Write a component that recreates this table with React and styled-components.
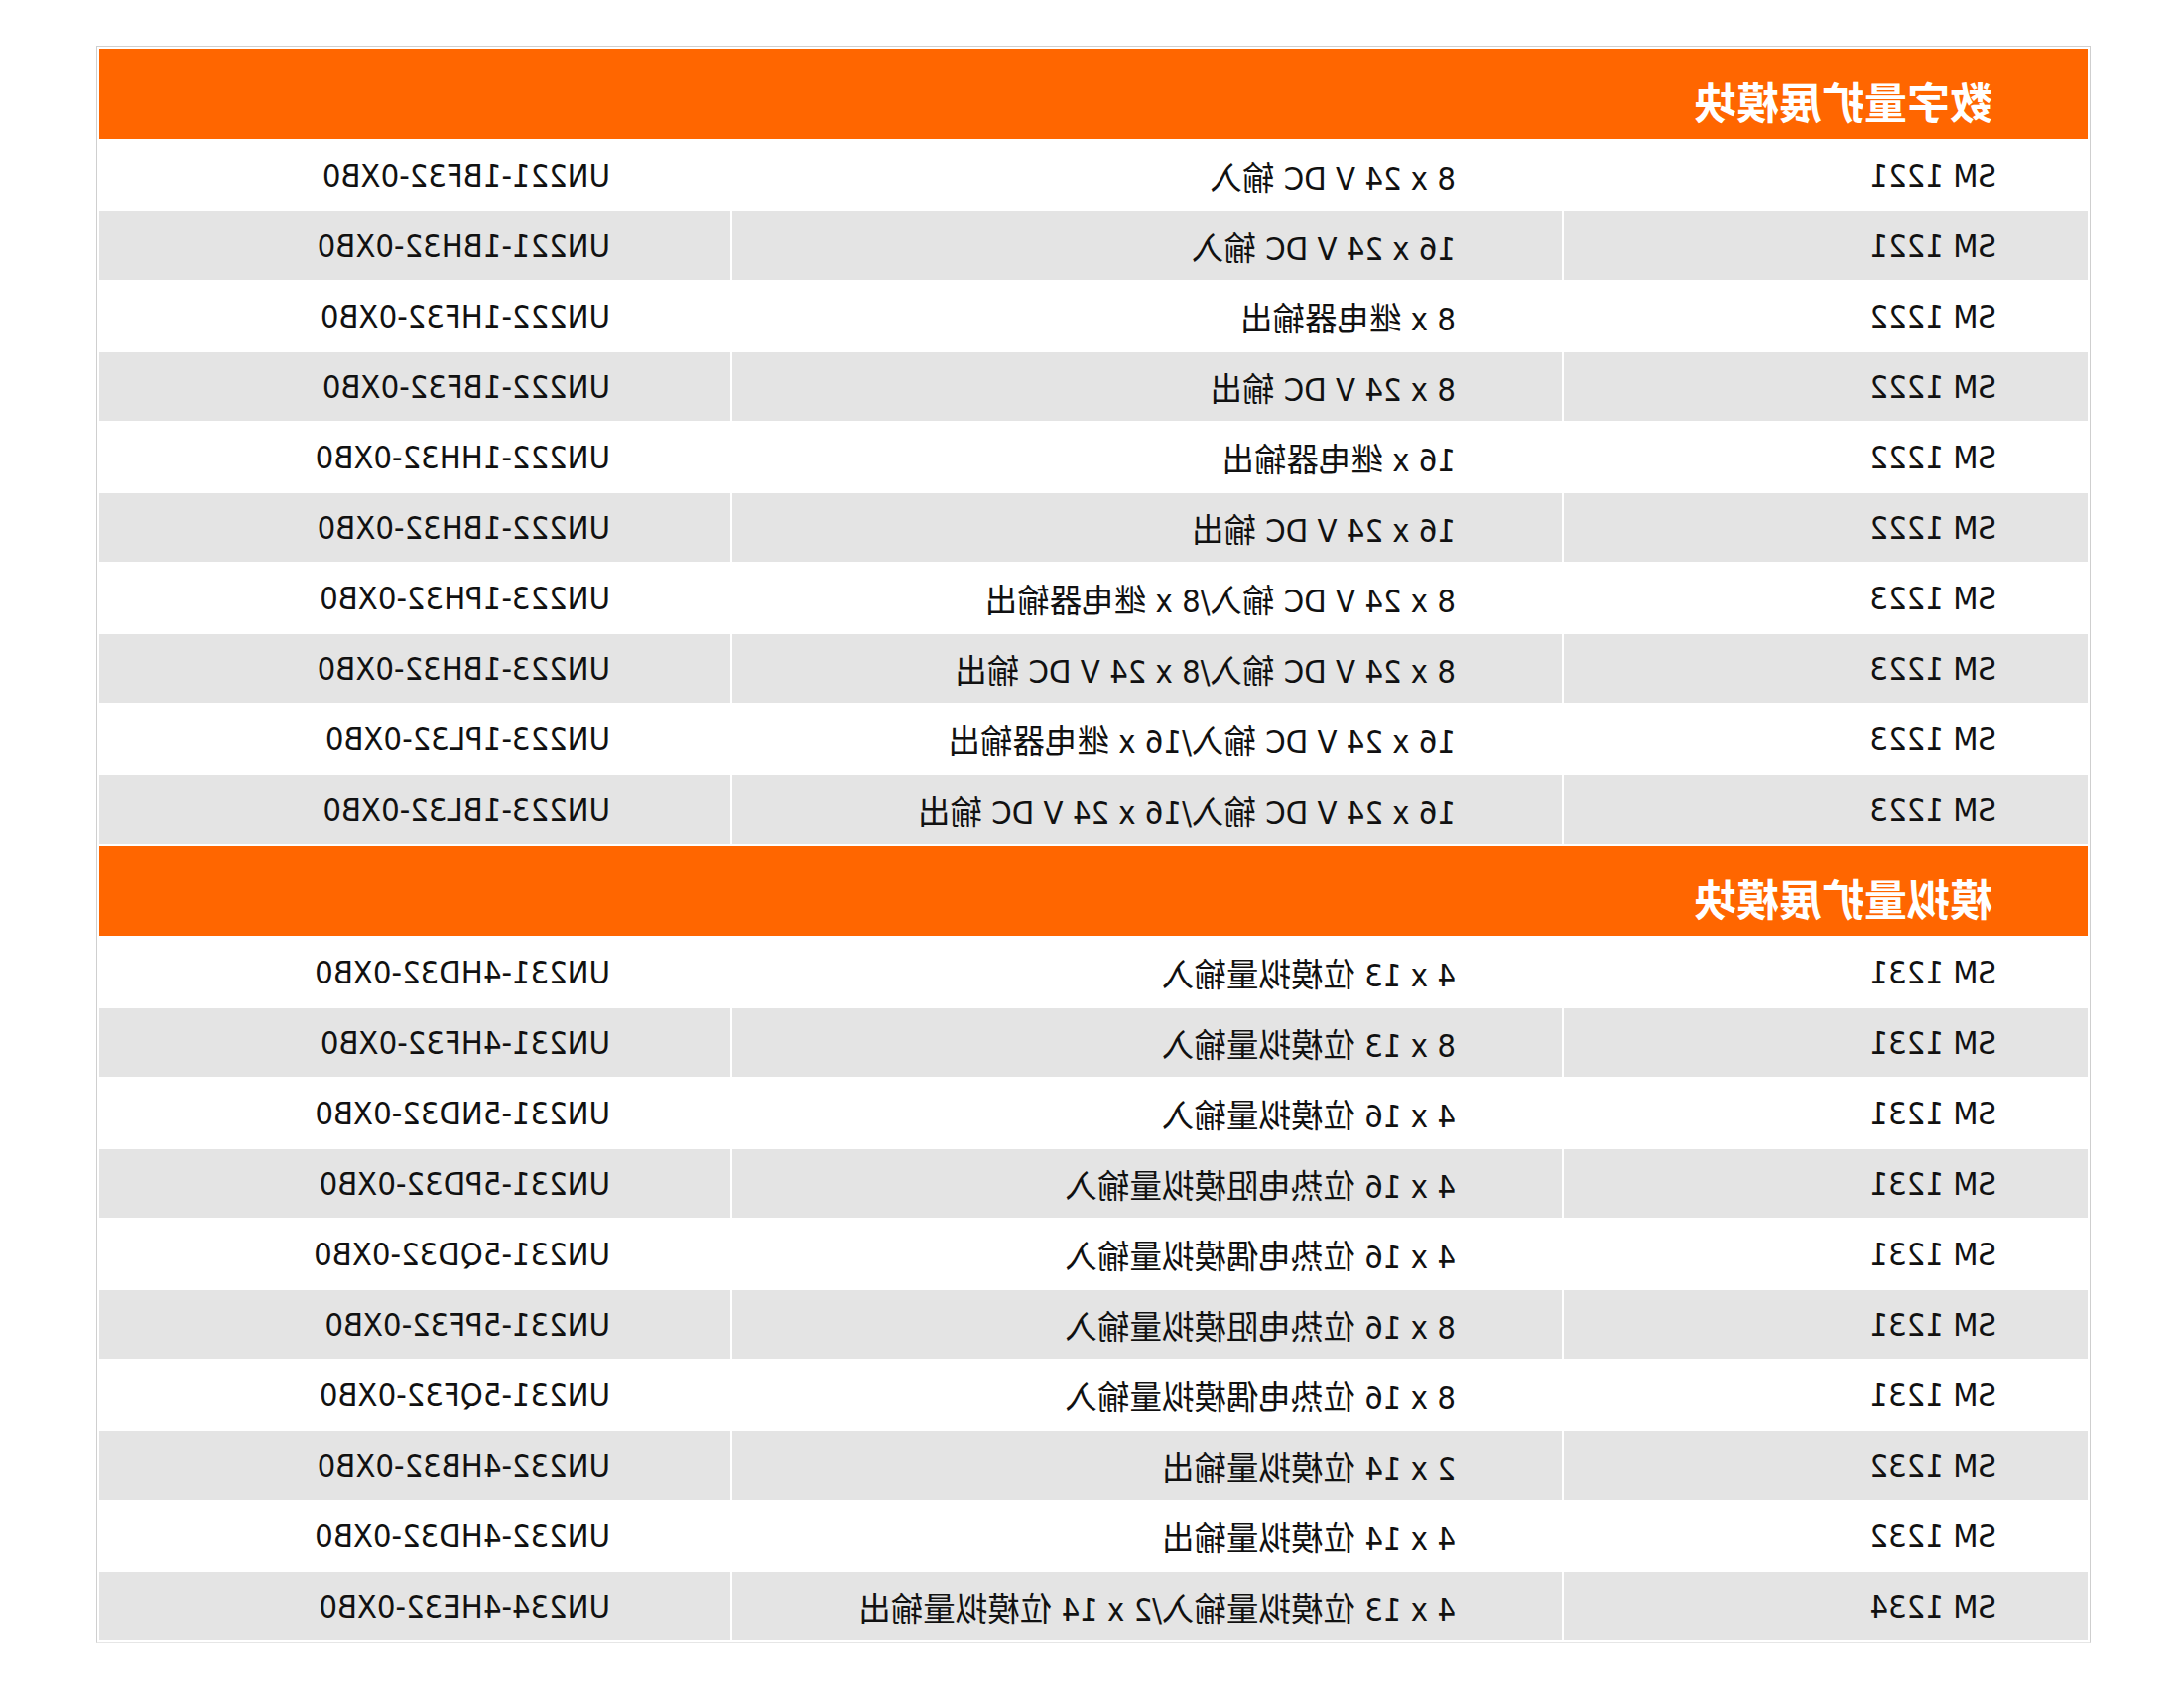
import React from "react";
import styled, { createGlobalStyle } from "styled-components";

const GlobalStyle = createGlobalStyle`
  body {
    margin: 0;
    background: #fff;
  }
`;

const Page = styled.div`
  padding: 46px 0 0 97px;
`;

// the whole sheet is shown mirrored, as in the source picture
const Sheet = styled.table`
  width: 2010px;
  table-layout: fixed;
  border: 1px solid #cfcfcf;
  border-bottom-color: #e6e6e6;
  border-collapse: separate;
  border-spacing: 2px;
  transform: scaleX(-1);
  font-family: "DejaVu Sans Condensed", "DejaVu Sans", "Noto Sans CJK SC", sans-serif;
  font-stretch: condensed;
  font-size: 32.5px;
  color: #111;
`;

const Col = styled.col`
  width: ${(p) => p.$w}px;
`;

const SectionHead = styled.th`
  height: 91px;
  padding: 12px 0 0 96px;
  box-sizing: border-box;
  background: #ff6600;
  color: #fff;
  text-align: left;
  vertical-align: middle;
  font-family: "Noto Sans CJK SC", sans-serif;
  font-stretch: normal;
  font-size: 43px;
  font-weight: 700;
`;

const Cell = styled.td`
  height: 69px;
  padding: 0 0 0 ${(p) => p.$indent}px;
  box-sizing: border-box;
  background: ${(p) => (p.$shade ? "#e4e4e4" : "#fff")};
  text-align: left;
  vertical-align: middle;
  white-space: nowrap;
`;

const sections = [
  {
    title: "数字量扩展模块",
    rows: [
      ["SM 1221", "8 x 24 V DC 输入", "UN221-1BF32-0XB0"],
      ["SM 1221", "16 x 24 V DC 输入", "UN221-1BH32-0XB0"],
      ["SM 1222", "8 x 继电器输出", "UN222-1HF32-0XB0"],
      ["SM 1222", "8 x 24 V DC 输出", "UN222-1BF32-0XB0"],
      ["SM 1222", "16 x 继电器输出", "UN222-1HH32-0XB0"],
      ["SM 1222", "16 x 24 V DC 输出", "UN222-1BH32-0XB0"],
      ["SM 1223", "8 x 24 V DC 输入/8 x 继电器输出", "UN223-1PH32-0XB0"],
      ["SM 1223", "8 x 24 V DC 输入/8 x 24 V DC 输出", "UN223-1BH32-0XB0"],
      ["SM 1223", "16 x 24 V DC 输入/16 x 继电器输出", "UN223-1PL32-0XB0"],
      ["SM 1223", "16 x 24 V DC 输入/16 x 24 V DC 输出", "UN223-1BL32-0XB0"],
    ],
  },
  {
    title: "模拟量扩展模块",
    rows: [
      ["SM 1231", "4 x 13 位模拟量输入", "UN231-4HD32-0XB0"],
      ["SM 1231", "8 x 13 位模拟量输入", "UN231-4HF32-0XB0"],
      ["SM 1231", "4 x 16 位模拟量输入", "UN231-5ND32-0XB0"],
      ["SM 1231", "4 x 16 位热电阻模拟量输入", "UN231-5PD32-0XB0"],
      ["SM 1231", "4 x 16 位热电偶模拟量输入", "UN231-5QD32-0XB0"],
      ["SM 1231", "8 x 16 位热电阻模拟量输入", "UN231-5PF32-0XB0"],
      ["SM 1231", "8 x 16 位热电偶模拟量输入", "UN231-5QF32-0XB0"],
      ["SM 1232", "2 x 14 位模拟量输出", "UN232-4HB32-0XB0"],
      ["SM 1232", "4 x 14 位模拟量输出", "UN232-4HD32-0XB0"],
      ["SM 1234", "4 x 13 位模拟量输入/2 x 14 位模拟量输出", "UN234-4HE32-0XB0"],
    ],
  },
];

const indents = [92, 107, 121];

export default function App() {
  return (
    <Page>
      <GlobalStyle />
      <Sheet>
        <colgroup>
          <Col $w={528} />
          <Col $w={836} />
          <Col $w={636} />
        </colgroup>
        {sections.map((section) => (
          <tbody key={section.title}>
            <tr>
              <SectionHead colSpan={3}>{section.title}</SectionHead>
            </tr>
            {section.rows.map((row, i) => (
              <tr key={row[2]}>
                {row.map((text, c) => (
                  <Cell key={c} $shade={i % 2 === 1} $indent={indents[c]}>
                    {text}
                  </Cell>
                ))}
              </tr>
            ))}
          </tbody>
        ))}
      </Sheet>
    </Page>
  );
}
